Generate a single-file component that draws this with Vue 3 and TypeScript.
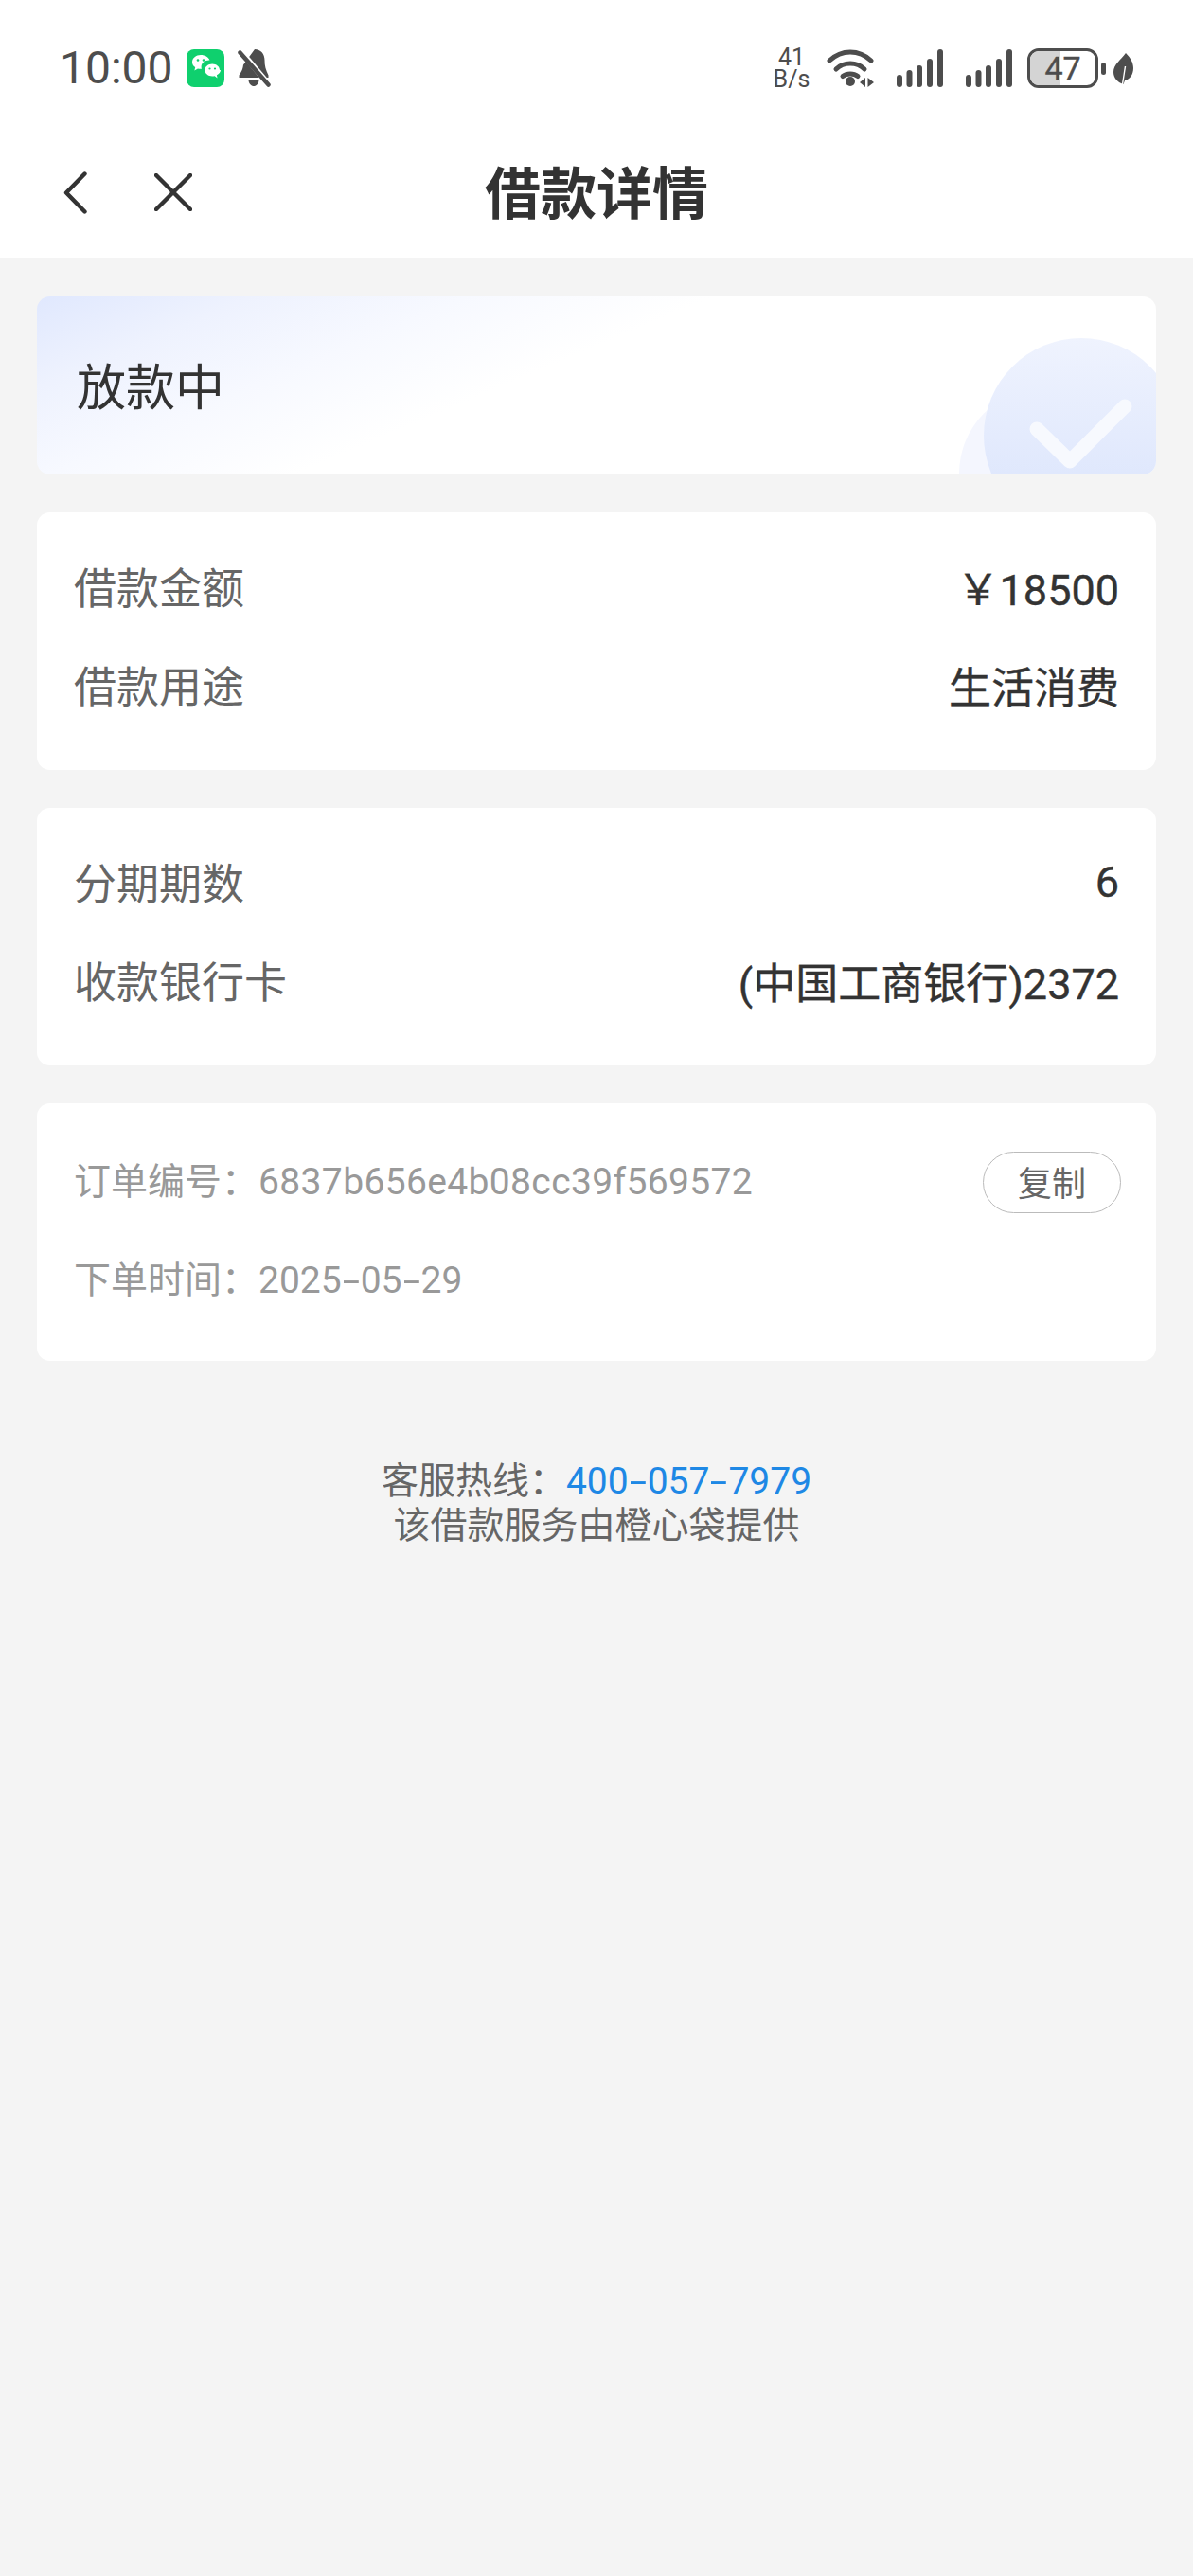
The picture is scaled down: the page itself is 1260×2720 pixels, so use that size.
<script setup lang="ts">
interface Row {
  label: string
  value: string
}

const loanRows: Row[] = [
  { label: '借款金额', value: '￥18500' },
  { label: '借款用途', value: '生活消费' }
]
const planRows: Row[] = [
  { label: '分期期数', value: '6' },
  { label: '收款银行卡', value: '(中国工商银行)2372' }
]
const signals = [0, 1]
</script>

<template>
  <div class="page">
    <header class="top">
      <div class="status">
        <div class="status-left">
          <span class="clock">10:00</span>
          <svg class="wechat" viewBox="0 0 40 40">
            <rect width="40" height="40" rx="8" fill="#0fd06e" />
            <path d="M15 6c-5 0-9 3.300-9 7.400 0 2.300 1.200 4.200 3.200 5.600l-.8 3.600 3.500-2.200c1 .3 2 .4 3.100.4l1-.1c-.3-.8-.4-1.500-.4-2.300 0-4 3.700-7 8.100-7l.8.100C23 8.200 19.400 6 15 6z" fill="#fff" />
            <path d="M35 22c0-3.600-3.500-6.500-7.800-6.500s-7.800 2.900-7.800 6.500 3.500 6.500 7.800 6.500c.9 0 1.700-.1 2.500-.3l2.900 2.200-.7-3.200c2.400-1.200 4.100-3.100 4.100-5.200z" fill="#fff" />
            <circle cx="12" cy="11.500" r="1.300" fill="#0fd06e" />
            <circle cx="18" cy="11.500" r="1.300" fill="#0fd06e" />
            <circle cx="24.500" cy="20.500" r="1.100" fill="#0fd06e" />
            <circle cx="30" cy="20.500" r="1.100" fill="#0fd06e" />
          </svg>
          <svg class="bell" viewBox="0 0 36 42">
            <path d="M19 1c6.500 0 10.500 5 10.500 11.500 0 6 1 10 4 16v2.500H2.500v-2.500c2.500-3.500 4-6.500 4.500-11z" fill="#4d4d4d" />
            <path d="M12.500 34h11c-.5 3.500-2.800 6-5.500 6s-5-2.500-5.500-6z" fill="#4d4d4d" />
            <path d="M5 4l27 32" stroke="#fff" stroke-width="6" />
            <path d="M3.500 4.500l30 34" stroke="#4d4d4d" stroke-width="4.500" stroke-linecap="round" />
          </svg>
        </div>
        <div class="status-right">
          <span class="speed">41 B/s</span>
          <svg class="wifi" viewBox="0 0 52 40">
            <path d="M3 12C16 0 34 0 47 12" fill="none" stroke="#4d4d4d" stroke-width="5" stroke-linecap="round" />
            <path d="M10 21C18 13 32 13 40 21" fill="none" stroke="#4d4d4d" stroke-width="5" stroke-linecap="round" />
            <path d="M17 28.500c4.500-3.500 11.500-3.500 16 0" fill="none" stroke="#4d4d4d" stroke-width="5" stroke-linecap="round" />
            <circle cx="25" cy="34" r="5" fill="#4d4d4d" />
            <path d="M41 30v10l-6-5zM43.500 30l6.500 5-6.500 5z" fill="#4d4d4d" />
          </svg>
          <svg v-for="s in signals" :key="s" class="signal" viewBox="0 0 49 40">
            <rect x="0" y="27" width="6" height="13" rx="3" />
            <rect x="10.500" y="22" width="6" height="18" rx="3" />
            <rect x="21" y="17" width="6" height="23" rx="3" />
            <rect x="32" y="10" width="6" height="30" rx="3" />
            <rect x="43" y="0" width="6" height="40" rx="3" />
          </svg>
          <div class="battery-wrap">
            <div class="battery">
              <span class="battery-level"></span>
              <span class="battery-num">47</span>
            </div>
            <span class="battery-nub"></span>
          </div>
          <svg class="leaf" viewBox="0 0 21 33">
            <path d="M13 0c5 5 8 10 8 16 0 7-4 12-9 13l-1.500 4C4 31 0 26 0 20 0 12 8 7 13 0z" fill="#4d4d4d" />
            <path d="M9.500 33 12.500 14" fill="none" stroke="#fff" stroke-width="1.400" />
          </svg>
        </div>
      </div>
      <nav class="nav">
        <div class="nav-icons">
          <svg class="back" viewBox="0 0 25 45">
            <path d="M22.500 2.500 3 22.500l19.500 20" fill="none" stroke="#333" stroke-width="4.400" stroke-linecap="round" stroke-linejoin="round" />
          </svg>
          <svg class="close" viewBox="0 0 40 40">
            <path d="M2 2l36 36M38 2 2 38" fill="none" stroke="#333" stroke-width="4.400" stroke-linecap="round" />
          </svg>
        </div>
        <h1 class="title">借款详情</h1>
      </nav>
    </header>

    <main class="content">
      <section class="banner">
        <span class="banner-text">放款中</span>
        <svg class="banner-art" viewBox="0 0 211 145">
          <defs>
            <linearGradient id="disc" x1="0" y1="0" x2="0" y2="1">
              <stop offset="0" stop-color="#eff3fe" />
              <stop offset="1" stop-color="#d9e3fc" />
            </linearGradient>
          </defs>
          <circle cx="93" cy="144" r="90" fill="#f4f6fe" />
          <circle cx="132" cy="104" r="103" fill="url(#disc)" />
          <path d="M85 97l35 34 58-58" fill="none" stroke="#f7f9fe" stroke-width="15" stroke-linecap="round" stroke-linejoin="round" />
        </svg>
      </section>

      <section class="card">
        <div v-for="r in loanRows" :key="r.label" class="row">
          <span class="label">{{ r.label }}</span>
          <span class="value">{{ r.value }}</span>
        </div>
      </section>

      <section class="card">
        <div v-for="r in planRows" :key="r.label" class="row">
          <span class="label">{{ r.label }}</span>
          <span class="value">{{ r.value }}</span>
        </div>
      </section>

      <section class="card">
        <div class="row">
          <span class="meta">订单编号：<span class="hash">6837b656e4b08cc39f569572</span></span>
          <button class="copy" type="button">复制</button>
        </div>
        <div class="row">
          <span class="meta">下单时间：2025<span class="dash">-</span>05<span class="dash">-</span>29</span>
        </div>
      </section>

      <footer class="foot">
        <div>客服热线：<span class="phone">400<span class="dash">-</span>057<span class="dash">-</span>7979</span></div>
        <div>该借款服务由橙心袋提供</div>
      </footer>
    </main>
  </div>
</template>

<style>
html,
body {
  margin: 0;
  background: #f4f4f4;
}
</style>

<style scoped>
.page {
  min-height: 2720px;
  background: #f4f4f4;
  font-family: Roboto, "Noto Sans CJK SC", sans-serif;
  color: #333;
}
.top {
  background: #fff;
}
.status {
  height: 144px;
  padding: 0 63px;
  display: flex;
  align-items: center;
  justify-content: space-between;
}
.status-left {
  display: flex;
  align-items: center;
}
.clock {
  font-size: 48px;
  color: #4d4d4d;
  line-height: 1;
}
.wechat {
  width: 40px;
  height: 40px;
  margin-left: 14px;
}
.bell {
  width: 36px;
  height: 42px;
  margin-left: 13px;
}
.status-right {
  display: flex;
  align-items: center;
}
.speed {
  width: 40px;
  font-size: 25px;
  line-height: 23px;
  text-align: center;
  color: #4d4d4d;
}
.wifi {
  width: 52px;
  height: 40px;
  margin-left: 17px;
}
.signal {
  width: 49px;
  height: 40px;
  margin-left: 22px;
  fill: #4d4d4d;
}
.signal + .signal {
  margin-left: 24px;
}
.battery-wrap {
  display: flex;
  align-items: center;
  margin-left: 16px;
}
.battery {
  position: relative;
  width: 75px;
  height: 42px;
  box-sizing: border-box;
  border: 3.5px solid #4d4d4d;
  border-radius: 12px;
  overflow: hidden;
  display: flex;
  align-items: center;
  justify-content: center;
}
.battery-level {
  position: absolute;
  left: 0;
  top: 0;
  bottom: 0;
  width: 47%;
  background: #d4d4d4;
}
.battery-num {
  position: relative;
  font-size: 34px;
  line-height: 1;
  color: #4d4d4d;
  -webkit-text-stroke: 0.4px #4d4d4d;
}
.battery-nub {
  width: 5px;
  height: 13px;
  margin-left: 3px;
  border-radius: 3px;
  background: #4d4d4d;
}
.leaf {
  width: 21px;
  height: 33px;
  margin-left: 8px;
}
.nav {
  position: relative;
  height: 128px;
  box-sizing: border-box;
  padding-bottom: 6px;
  display: flex;
  align-items: center;
  justify-content: center;
}
.nav-icons {
  position: absolute;
  left: 67px;
  top: 0;
  bottom: 10px;
  display: flex;
  align-items: center;
}
.back {
  width: 25px;
  height: 45px;
}
.close {
  width: 40px;
  height: 40px;
  margin-left: 71px;
}
.title {
  margin: 0;
  font-size: 59px;
  font-weight: 700;
  line-height: 1;
  color: #333;
}
.content {
  padding: 41px 39px 0;
  display: flex;
  flex-direction: column;
  gap: 40px;
}
.banner {
  position: relative;
  height: 188px;
  padding-left: 42px;
  display: flex;
  align-items: center;
  border-radius: 14px;
  overflow: hidden;
  background: linear-gradient(157deg, #e0e8fe 0%, #eef2fe 14%, #f7f9ff 28%, #fff 44%);
}
.banner-text {
  font-size: 52px;
  line-height: 1;
  padding-top: 8px;
  color: #333;
}
.banner-art {
  position: absolute;
  right: 0;
  bottom: 0;
  width: 211px;
  height: 145px;
}
.card {
  height: 272px;
  box-sizing: border-box;
  padding: 27px 39px 0;
  border-radius: 14px;
  background: #fff;
}
.row {
  height: 104px;
  display: flex;
  align-items: center;
  justify-content: space-between;
}
.label {
  padding-bottom: 3px;
  font-size: 45px;
  color: #666;
}
.value {
  padding-bottom: 2px;
  font-size: 45px;
  color: #333;
  -webkit-text-stroke: 0.4px #333;
}
.meta {
  font-size: 39px;
  color: #999;
}
.hash {
  letter-spacing: 0.36px;
}
.dash {
  display: inline-block;
  width: 20px;
  text-align: center;
  transform: scaleX(1.7);
}
.copy {
  width: 146px;
  height: 65px;
  margin-top: 8px;
  margin-right: -2px;
  padding: 0 0 2px;
  box-sizing: border-box;
  border: 1px solid #bbb;
  border-radius: 33px;
  background: #fff;
  font: inherit;
  font-size: 36px;
  color: #666;
}
.foot {
  margin-top: 64px;
  text-align: center;
  font-size: 39px;
  line-height: 47px;
  color: #666;
}
.phone {
  color: #1e88e5;
}
</style>
